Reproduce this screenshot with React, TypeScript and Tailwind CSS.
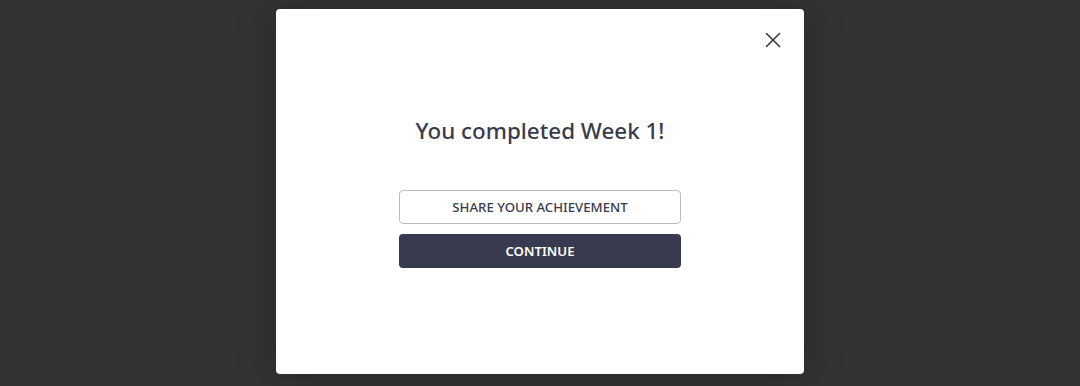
import { X } from "lucide-react";

export default function App() {
  return (
    <div className="w-full h-[386px] bg-[#333333] flex justify-center pt-[9px] overflow-hidden font-['Noto_Sans',sans-serif]">
      <div className="relative w-[528px] h-[365px] bg-white rounded-[4px] shadow-[0_0_40px_rgba(0,0,0,0.25)] flex flex-col items-center pt-[106px]">
        <button className="absolute top-[18px] right-[18px] text-[#3a3b4d]">
          <X size={26} strokeWidth={1.5} />
        </button>
        <h1 className="text-[22.4px] leading-[32px] font-medium text-[#3a3b4d]">You completed Week 1!</h1>
        <div className="mt-[43px] w-[282px] flex flex-col gap-[10px]">
          <button className="h-[34px] pt-px border border-[#b9b9bf] rounded-[4px] text-[13.2px] font-medium text-[#3a3b4d]">
            SHARE YOUR ACHIEVEMENT
          </button>
          <button className="h-[34px] pt-px bg-[#383a50] rounded-[4px] text-[13.2px] font-semibold text-white">
            CONTINUE
          </button>
        </div>
      </div>
    </div>
  );
}
